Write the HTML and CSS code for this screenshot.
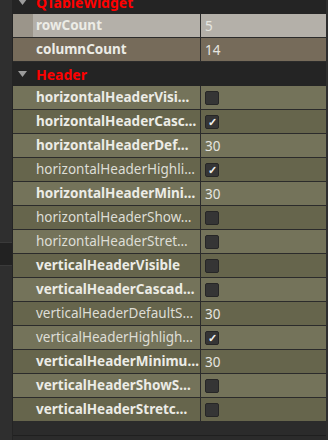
FILE: index.html
```html
<!doctype html>
<html lang="en">
<head>
    <meta charset="utf-8" />
    <meta name="viewport" content="width=device-width,initial-scale=1" />
    <title>Property Editor</title>
    <link rel="stylesheet" href="styles.css">
</head>
<body>
    <div class="panel">
        <div class="gutter">
            <div class="gutter-space"></div>
            <div class="gutter-handle"></div>
        </div>

        <div class="tree">
            <div class="group">
                <svg class="arrow" width="9" height="6" viewBox="0 0 9 6"><polygon points="0,0 9,0 4.5,6" /></svg>
                <span>QTableWidget</span>
            </div>
            <div class="row selected">
                <div class="name bold">rowCount</div>
                <div class="value">5</div>
            </div>
            <div class="row current">
                <div class="name bold">columnCount</div>
                <div class="value">14</div>
            </div>

            <div class="group">
                <svg class="arrow" width="9" height="6" viewBox="0 0 9 6"><polygon points="0,0 9,0 4.5,6" /></svg>
                <span>Header</span>
            </div>
            <div class="row">
                <div class="name bold">horizontalHeaderVisi…</div>
                <div class="value"><span class="check"></span></div>
            </div>
            <div class="row alt">
                <div class="name bold">horizontalHeaderCasc…</div>
                <div class="value"><span class="check on">✓</span></div>
            </div>
            <div class="row">
                <div class="name bold">horizontalHeaderDef…</div>
                <div class="value">30</div>
            </div>
            <div class="row alt">
                <div class="name">horizontalHeaderHighli…</div>
                <div class="value"><span class="check on">✓</span></div>
            </div>
            <div class="row">
                <div class="name bold">horizontalHeaderMini…</div>
                <div class="value">30</div>
            </div>
            <div class="row alt">
                <div class="name">horizontalHeaderShow…</div>
                <div class="value"><span class="check"></span></div>
            </div>
            <div class="row">
                <div class="name">horizontalHeaderStret…</div>
                <div class="value"><span class="check"></span></div>
            </div>
            <div class="row alt">
                <div class="name bold">verticalHeaderVisible</div>
                <div class="value"><span class="check"></span></div>
            </div>
            <div class="row">
                <div class="name bold">verticalHeaderCascad…</div>
                <div class="value"><span class="check"></span></div>
            </div>
            <div class="row alt">
                <div class="name">verticalHeaderDefaultS…</div>
                <div class="value">30</div>
            </div>
            <div class="row">
                <div class="name">verticalHeaderHighligh…</div>
                <div class="value"><span class="check on">✓</span></div>
            </div>
            <div class="row alt">
                <div class="name bold">verticalHeaderMinimu…</div>
                <div class="value">30</div>
            </div>
            <div class="row">
                <div class="name bold">verticalHeaderShowS…</div>
                <div class="value"><span class="check"></span></div>
            </div>
            <div class="row alt">
                <div class="name bold">verticalHeaderStretc…</div>
                <div class="value"><span class="check"></span></div>
            </div>
            <div class="tree-bottom"></div>
        </div>
    </div>
</body>
</html>
```

FILE: styles.css
```css
body { margin:0; background:#2e2e2e; font-family:"Noto Sans", sans-serif; font-size:13.5px; color:#e6e6e0; height:440px; overflow:hidden; }
.panel { display:flex; height:440px; }
.gutter { width:12px; border-right:1px solid #242424; display:flex; flex-direction:column; background:#2f2f2f; }
.gutter-space { height:242px; }
.gutter-handle { height:22px; background:#222; border-top:1px solid #3a3a3a; border-bottom:1px solid #3a3a3a; }
.tree { flex:1; margin-top:-10px; margin-right:2px; background:#2b2b2b; display:flex; flex-direction:column; }
.group { height:24px; display:flex; align-items:center; background:#242424; color:#ff0000; font-weight:bold; font-size:14px; }
.arrow { fill:#9c9c9c; margin-left:5px; margin-right:9px; }
.row { display:grid; grid-template-columns:187px 1fr; height:24px; box-sizing:border-box; border-bottom:1px solid #2b2b2b; background:#74735a; }
.row.alt { background:#66654c; }
.row.selected { background:#b4b0a9; grid-template-columns:20px 167px 1fr; }
.row.selected::before { content:""; background:#9b958a; }
.row.selected .name { padding-left:3px; }
.row.current { background:#766b5a; }
.name { padding-left:23px; padding-right:2px; line-height:23px; white-space:nowrap; overflow:hidden; color:#deded6; }
.name.bold { font-weight:bold; color:#ececE6; }
.value { border-left:1px solid #2b2b2b; padding-left:4px; display:flex; align-items:center; color:#e6e6e0; }
.check { width:12px; height:12px; border:1px solid #262626; border-radius:2px; background:#353535; color:#f0f0f0; font-size:11px; font-weight:bold; line-height:12px; text-align:center; }
.tree-bottom { flex:1; border-bottom:1px solid #1f1f1f; margin-bottom:4px; }
```
